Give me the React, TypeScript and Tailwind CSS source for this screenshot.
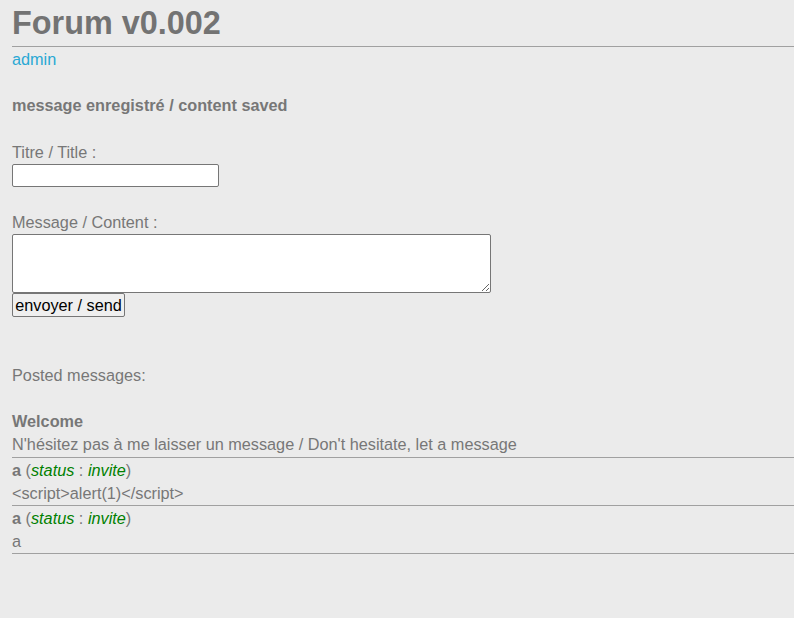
import React from "react";

const font = { fontFamily: '"Liberation Sans", Arial, sans-serif' };

function Post({ author, body }: { author: string; body: string }) {
  return (
    <div className="border-t border-[#a0a0a0]">
      <div className="mt-[3px] leading-[18px]">
        <b>{author}</b> (<i className="text-[#008000]">status</i> : <i className="text-[#008000]">invite</i>)
      </div>
      <div className="mt-[5px] mb-[3px] leading-[18px]">{body}</div>
    </div>
  );
}

export default function App() {
  return (
    <div
      className="min-h-[618px] bg-[#ebebeb] pl-[12px] text-[16.25px] text-[#777777]"
      style={font}
    >
      <h1 className="pt-[5px] text-[32.4px] font-bold leading-[37px] text-[#737373]">Forum v0.002</h1>
      <div className="mt-[4px] border-t border-[#a0a0a0]" />
      <div className="mt-[3px] leading-[18px]">
        <a href="#" className="text-[#29a8d4]">admin</a>
      </div>
      <div className="mt-[28px] font-bold leading-[18px]">message enregistré / content saved</div>
      <div className="mt-[29px] leading-[18px]">Titre / Title :</div>
      <div className="mt-[3px] flex">
        <input type="text" className="h-[23px] w-[207px] rounded-[2px] border border-[#767676] bg-white" />
      </div>
      <div className="mt-[26px] leading-[18px]">Message / Content :</div>
      <div className="mt-[3px] flex">
        <textarea className="h-[59px] w-[479px] rounded-[2px] border border-[#767676] bg-white" />
      </div>
      <div className="flex">
        <button className="h-[24px] w-[113px] rounded-[2px] border border-[#767676] bg-[#efefef] p-0 text-center text-[16.25px] leading-[20px] text-black">
          envoyer / send
        </button>
      </div>
      <div className="mt-[49px] leading-[18px]">Posted messages:</div>
      <div className="mt-[28px] font-bold leading-[18px]">Welcome</div>
      <div className="mt-[5px] mb-[4px] leading-[18px]">N'hésitez pas à me laisser un message / Don't hesitate, let a message</div>
      <Post author="a" body="<script>alert(1)</script>" />
      <Post author="a" body="a" />
      <div className="border-t border-[#a0a0a0]" />
    </div>
  );
}
